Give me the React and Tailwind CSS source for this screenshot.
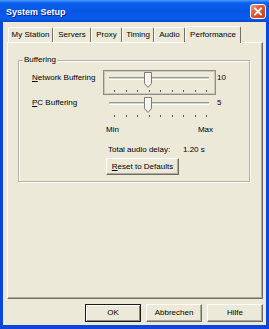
import React from "react";

function CloseBtn() {
  return (
    <div className="w-[16px] h-[15px] rounded-[3px] border border-white bg-[linear-gradient(135deg,#F19A7E_0%,#E2552F_45%,#C8401C_100%)] flex items-center justify-center">
      <svg width="10" height="9" viewBox="0 0 10 9">
        <path d="M2 1.5 L8 7.5 M8 1.5 L2 7.5" stroke="#fff" strokeWidth="1.8" strokeLinecap="square" />
      </svg>
    </div>
  );
}

function Slider({ focused }) {
  const ticks = Array.from({ length: 9 }, (_, i) => Math.round(10 + i * 11.5));
  return (
    <div
      className={
        "w-[113px] h-[25px] border " +
        (focused ? "border-[#8f8e84] shadow-[inset_0_0_0_1px_#c9c8bc]" : "border-transparent")
      }
    >
      <svg width="111" height="23" viewBox="0 0 111 23" className="block">
        <rect x="5" y="6" width="100" height="1" fill="#9a998e" />
        <rect x="5" y="7" width="100" height="1" fill="#d6d5ca" />
        <rect x="5" y="8" width="100" height="1" fill="#ffffff" />
        {ticks.map((x) => (
          <rect key={x} x={x} y="19" width="1" height="2" fill="#55544c" />
        ))}
        <polygon points="40.5,1.5 47.5,1.5 47.5,12.5 44,16.5 40.5,12.5" fill="#F4F3EE" stroke="#7d7b70" strokeWidth="1" />
        <path d="M41.5 12 V2.5 H46.5" stroke="#ffffff" strokeWidth="1" fill="none" />
      </svg>
    </div>
  );
}

function Tab({ w, label, selected }) {
  if (selected) {
    return (
      <div
        className={
          "relative z-10 -mb-[1px] h-[17px] flex items-center justify-center bg-[#ECE9D8] border-t border-l border-white border-r border-r-[#716F64] rounded-t-[2px] text-[8px] leading-[10px] " +
          w
        }
      >
        {label}
      </div>
    );
  }
  return (
    <div
      className={
        "h-[15px] flex items-center justify-center bg-[#ECE9D8] border-t border-l border-white border-r border-r-[#716F64] rounded-t-[2px] text-[8px] leading-[10px] " +
        w
      }
    >
      {label}
    </div>
  );
}

function Btn({ children, def, w }) {
  return (
    <div
      className={
        "h-[18px] flex items-center justify-center text-[8px] leading-[10px] bg-[#ECE9D8] " +
        w +
        " " +
        (def
          ? "border border-[#1b1b18] shadow-[inset_1px_1px_0_#fff,inset_-1px_-1px_0_#8a887c]"
          : "border border-t-white border-l-white border-r-[#716F64] border-b-[#716F64] shadow-[inset_-1px_-1px_0_#ACA899]")
      }
    >
      {children}
    </div>
  );
}

export default function App() {
  return (
    <div className="w-[269px] h-[329px] flex flex-col bg-[#0A46DC] font-['Liberation_Sans',Arial,sans-serif] text-black select-none">
      <div className="h-[22px] shrink-0 flex items-center justify-between pl-[6px] pr-[3px] bg-[linear-gradient(to_bottom,#4A9BFF_0%,#0C60EC_14%,#0556E6_50%,#0A5DEA_85%,#0546CC_100%)]">
        <span className="pt-[2px] text-white font-bold text-[9px] leading-none [text-shadow:1px_1px_0_#0A1E8A]">
          System Setup
        </span>
        <CloseBtn />
      </div>
      <div className="flex-1 flex flex-col mx-[3px] mb-[4px] bg-[#ECE9D8] pt-[4px] pl-[4px] pr-[3px] pb-[3px]">
        <div className="h-[16px] flex items-end ml-[1px]">
          <Tab w="w-[45px]" label="My Station" />
          <Tab w="w-[38px]" label="Servers" />
          <Tab w="w-[31px]" label="Proxy" />
          <Tab w="w-[32px]" label="Timing" />
          <Tab w="w-[31px]" label="Audio" />
          <Tab w="w-[56px]" label="Performance" selected />
        </div>
        <div className="h-[257px] border border-t-white border-l-white border-r-[#716F64] border-b-[#716F64] shadow-[inset_-1px_-1px_0_#ACA899]">
          <div className="relative ml-[10px] mt-[17px] w-[232px] h-[122px] border border-[#b3b2a4] shadow-[inset_1px_1px_0_#fff,1px_1px_0_#fff] pt-[9px] pl-[13px]">
            <span className="absolute -top-[6px] left-[4px] px-[1px] bg-[#ECE9D8] text-[8px] leading-[10px]">
              Buffering
            </span>
            <div className="flex items-start">
              <div className="w-[71px] mt-[3px] text-[8px] leading-[10px]">
                <span className="underline">N</span>etwork Buffering
              </div>
              <Slider focused />
              <div className="ml-[1px] mt-[3px] text-[8px] leading-[10px]">10</div>
            </div>
            <div className="flex items-start">
              <div className="w-[71px] mt-[3px] text-[8px] leading-[10px]">
                <span className="underline">P</span>C Buffering
              </div>
              <Slider />
              <div className="ml-[1px] mt-[3px] text-[8px] leading-[10px]">5</div>
            </div>
            <div className="ml-[74px] mt-[5px] w-[107px] flex justify-between text-[8px] leading-[10px]">
              <span>Min</span>
              <span>Max</span>
            </div>
            <div className="ml-[76px] mt-[10px] flex text-[8px] leading-[10px]">
              <span className="w-[75px]">Total audio delay:</span>
              <span>1.20 s</span>
            </div>
            <div className="ml-[74px] mt-[3px] w-[73px] h-[17px] flex items-center justify-center text-[8px] leading-[10px] bg-[#ECE9D8] border border-t-white border-l-white border-r-[#716F64] border-b-[#716F64] shadow-[inset_-1px_-1px_0_#ACA899]">
              <span>
                <span className="underline">R</span>eset to Defaults
              </span>
            </div>
          </div>
        </div>
        <div className="mt-[5px] flex justify-end gap-[5px]">
          <Btn def w="w-[56px]">OK</Btn>
          <Btn w="w-[56px]">Abbrechen</Btn>
          <Btn w="w-[56px]">Hilfe</Btn>
        </div>
      </div>
    </div>
  );
}
